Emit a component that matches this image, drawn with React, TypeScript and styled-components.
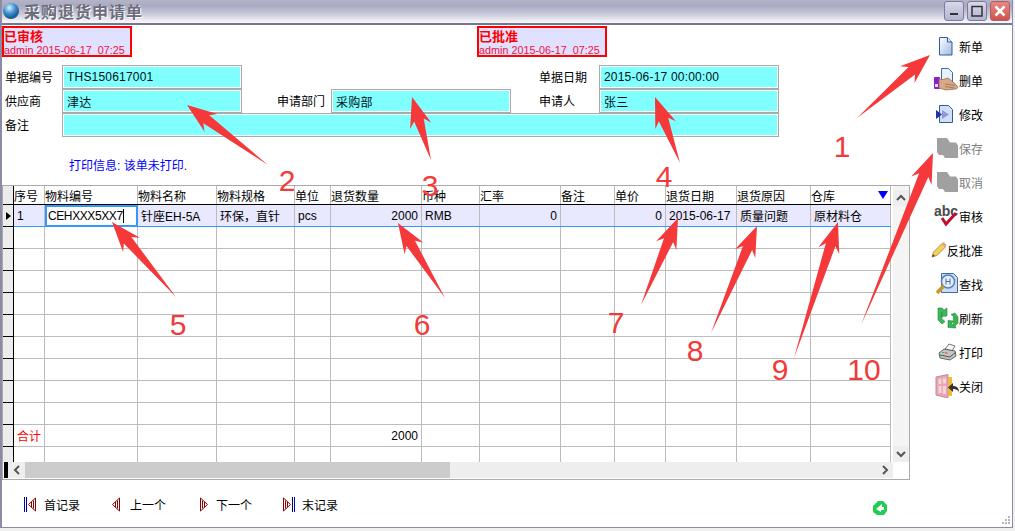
import React from 'react';
import styled, { createGlobalStyle } from 'styled-components';

const FONT = `"Liberation Sans", "Noto Sans CJK SC", sans-serif`;
const COLS = '31px 93px 79px 78px 36px 91px 58px 81px 54px 51px 71px 74px 80px';
const LINE = '#bcbcbc';

const Global = createGlobalStyle`
  html, body { margin: 0; padding: 0; background: #f0f0f0; }
  body { font: 12px ${FONT}; color: #000; }
`;

const Win = styled.div`
  position: relative;
  width: 1013px;
  height: 528px;
  box-sizing: border-box;
  display: flex;
  flex-direction: column;
  background: #fff;
  border-left: 2px solid #8b8ba6;
  border-right: 1px solid #8b8ba6;
  border-bottom: 1px solid #8b8ba6;
  overflow: hidden;
`;

const TitleBar = styled.div`
  flex: none;
  height: 25px;
  margin-left: -2px;
  margin-right: -1px;
  box-sizing: border-box;
  display: flex;
  align-items: center;
  gap: 5px;
  padding: 0 3px 1px 3px;
  background: linear-gradient(180deg, #b4b4c8 0%, #a9a9c1 25%, #c8c8d8 60%, #f6f6fa 96%);
  border-bottom: 2px solid #76768f;
`;

const Ball = styled.div`
  width: 16px;
  height: 16px;
  border-radius: 50%;
  background: radial-gradient(circle at 40% 30%, #d9f2ff 0%, #3f8fd0 40%, #165a8e 70%, #4f9a4a 100%);
`;

const TitleText = styled.div`
  font-size: 16px;
  font-weight: 700;
  letter-spacing: 1px;
  color: #6c6c7c;
  text-shadow: 1px 1px 0 #fff;
  flex: 1;
`;

const CapGroup = styled.div`
  display: flex;
  gap: 3px;
`;

const CapBtn = styled.div<{ $close?: boolean }>`
  width: 20px;
  height: 20px;
  box-sizing: border-box;
  border: 1px solid ${(p) => (p.$close ? '#b06060' : '#7b7b9c')};
  border-radius: 3px;
  display: flex;
  align-items: center;
  justify-content: center;
  background: ${(p) =>
    p.$close
      ? 'linear-gradient(180deg, #e48a80, #d0524c)'
      : 'linear-gradient(180deg, #d8d8e8, #b4b4d0)'};
`;

const Body = styled.div`
  flex: 1;
  display: flex;
  min-height: 0;
`;

const Main = styled.div`
  width: 908px;
  flex: none;
  display: flex;
  flex-direction: column;
`;

const Stamps = styled.div`
  display: flex;
  gap: 345px;
  margin-top: 1px;
`;

const Stamp = styled.div`
  width: 130px;
  height: 31px;
  box-sizing: border-box;
  border: 2px solid #f00;
  background: #e0e0ff;
  color: #f00;
  display: flex;
  flex-direction: column;
  justify-content: center;
`;

const StampTitle = styled.div`
  font-size: 13px;
  font-weight: 700;
  line-height: 15px;
  margin-top: 1px;
`;

const StampMeta = styled.div`
  font-size: 10.8px;
  line-height: 12px;
  white-space: pre;
  color: #f01040;
`;

const Form = styled.div`
  display: grid;
  grid-template-columns: 60px 180px 89px 180px 88px 180px;
  grid-auto-rows: 24px;
  margin-top: 8px;
`;

const FieldLabel = styled.div<{ $pad?: number }>`
  display: flex;
  align-items: center;
  padding-left: ${(p) => p.$pad ?? 3}px;
  padding-bottom: 1px;
  font-size: 12px;
`;

const Field = styled.div<{ $span?: number }>`
  grid-column: span ${(p) => p.$span ?? 1};
  box-sizing: border-box;
  height: 24px;
  border: 1px solid #aaa;
  box-shadow: inset 0 0 0 1px #fff;
  background: #80ffff;
  display: flex;
  align-items: center;
  padding-left: 4px;
  letter-spacing: 0.2px;
  color: #001018;
`;

const PrintInfo = styled.div`
  margin: 22px 0 0 67px;
  height: 14px;
  line-height: 14px;
  color: #00f;
`;

const GridFrame = styled.div`
  margin-top: 12px;
  height: 295px;
  box-sizing: border-box;
  border: 1px solid #aaa;
  display: flex;
  flex-direction: column;
`;

const GridBody = styled.div`
  flex: 1;
  display: flex;
  gap: 2px;
  min-height: 0;
  overflow: hidden;
`;

const Table = styled.div`
  width: 888px;
  flex: none;
  overflow: hidden;
`;

const Row = styled.div<{ $h?: number; $active?: boolean; $header?: boolean }>`
  display: grid;
  grid-template-columns: 11px ${COLS};
  height: ${(p) => p.$h ?? 22}px;
  box-sizing: border-box;
  background: ${(p) => (p.$active ? '#e8e8ff' : '#fff')};
  border-bottom: 1px solid
    ${(p) => (p.$header ? '#000' : p.$active ? '#3399ff' : LINE)};
`;

const Indicator = styled.div`
  background: #ececec;
  border-right: 1px solid #000;
  margin-bottom: -1px;
  box-shadow: inset 0 -1px 0 #000;
  display: flex;
  align-items: center;
  justify-content: center;
`;

const Pointer = styled.div`
  width: 0;
  height: 0;
  border-left: 5px solid #000;
  border-top: 4px solid transparent;
  border-bottom: 4px solid transparent;
`;

const Cell = styled.div<{ $right?: boolean; $red?: boolean }>`
  box-sizing: border-box;
  border-right: 1px solid ${LINE};
  display: flex;
  align-items: center;
  justify-content: ${(p) => (p.$right ? 'flex-end' : 'flex-start')};
  padding: 0 3px 0 3px;
  white-space: nowrap;
  overflow: hidden;
  color: ${(p) => (p.$red ? '#f00' : '#000')};
`;

const HeadCell = styled(Cell)`
  padding: 0 2px 0 0;
  justify-content: space-between;
`;

const EditCell = styled.div`
  box-sizing: border-box;
  margin: 0 0 -1px 0;
  border: 2px solid #3399ff;
  background: #fff;
  display: flex;
  align-items: center;
  padding-left: 1px;
  letter-spacing: -0.4px;
`;

const Caret = styled.span`
  display: inline-block;
  width: 1px;
  height: 14px;
  background: #000;
`;

const SortMark = styled.div`
  width: 0;
  height: 0;
  border-top: 8px solid #00f;
  border-left: 5px solid transparent;
  border-right: 5px solid transparent;
`;

const VScroll = styled.div`
  width: 16px;
  flex: none;
  background: #f4f4f4;
  display: flex;
  flex-direction: column;
  justify-content: space-between;
  padding-top: 4px;
`;

const ScrollBtn = styled.div<{ $w?: number }>`
  width: ${(p) => p.$w ?? 16}px;
  height: 16px;
  flex: none;
  background: #eee;
  display: flex;
  align-items: center;
  justify-content: center;
`;

const HScroll = styled.div`
  height: 16px;
  flex: none;
  display: flex;
  margin-bottom: 1px;
  padding-right: 16px;
`;

const BlackTab = styled.div`
  width: 4px;
  margin-left: 1px;
  background: #000;
`;

const Thumb = styled.div`
  width: 425px;
  background: #ccc;
`;

const HTrack = styled.div`
  flex: 1;
  background: #eee;
  display: flex;
  justify-content: flex-end;
`;

const BottomBar = styled.div`
  display: flex;
  align-items: center;
  padding-left: 22px;
  margin-top: 15px;
  height: 18px;
`;

const NavBtn = styled.div<{ $w: number; $gap: number }>`
  width: ${(p) => p.$w}px;
  flex: none;
  display: flex;
  align-items: center;
  gap: ${(p) => p.$gap}px;
`;

const GreenSpot = styled.div`
  margin-left: 529px;
  margin-top: 8px;
  display: flex;
`;

const Toolbar = styled.div`
  width: 73px;
  flex: none;
  display: flex;
  flex-direction: column;
  padding-top: 4px;
`;

const Tool = styled.div<{ $off?: boolean }>`
  height: 34px;
  display: flex;
  align-items: center;
  justify-content: flex-end;
  color: ${(p) => (p.$off ? '#808080' : '#000')};
`;

const Grip = styled.svg`
  position: absolute;
  right: 1px;
  bottom: 1px;
`;

const Overlay = styled.svg`
  position: absolute;
  left: -2px;
  top: 0;
  pointer-events: none;
`;

const Mark = styled.span<{ $x: number; $y: number }>`
  position: absolute;
  left: ${(p) => p.$x - 2}px;
  top: ${(p) => p.$y}px;
  transform: translate(-50%, -50%);
  font: 30px ${FONT};
  line-height: 30px;
  color: #f23a3a;
`;

const DocIcon = () => (
  <svg width="24" height="22" viewBox="0 0 24 22">
    <defs>
      <linearGradient id="doc" x1="0" y1="0" x2="1" y2="1">
        <stop offset="0" stopColor="#fff" />
        <stop offset="1" stopColor="#9db9e4" />
      </linearGradient>
    </defs>
    <path d="M4.500 2.500h8l4.500 4.500v13H4.500z" fill="url(#doc)" stroke="#2f5da0" />
    <path d="M12.500 2.500V7H17" fill="#dbe6f7" stroke="#2f5da0" />
  </svg>
);

const HandIcon = () => (
  <svg width="25" height="26" viewBox="0 0 25 26">
    <path d="M7.500 1.500h7l4 4v10h-11z" fill="#e8f0fb" stroke="#3d6bb0" />
    <rect x="0" y="10" width="6" height="12" rx="1" fill="#8a1fd0" />
    <rect x="1" y="17" width="3" height="3" fill="#e8d8ff" />
    <path d="M5 12l4 .5 5-1.500 8 6.500 2 3-2 1.500-10 1-7-2z" fill="#d9a884" stroke="#8a6650" strokeWidth=".7" />
    <path d="M11 17l10 1.500M11 19.500l9 1.500" stroke="#8a6650" strokeWidth=".7" />
  </svg>
);

const EditIcon = () => (
  <svg width="24" height="22" viewBox="0 0 24 22">
    <path d="M4.500 2.500h9l4 4v13h-13z" fill="#cfe0f6" stroke="#2f5da0" />
    <path d="M1 7l6 4.500-6 4.500z" fill="#22349c" />
    <path d="M7 7l7 4.500-7 4.500z" fill="#8e97d8" />
  </svg>
);

const BlobIcon = () => (
  <svg width="24" height="24" viewBox="0 0 24 24">
    <path d="M2 2h10l3 4.500h6l2 3V22H10l-2-3H4l-2-3z" fill="#a0a0a0" />
  </svg>
);

const AbcIcon = () => (
  <svg width="25" height="24" viewBox="0 0 25 24">
    <text x="0" y="12" fontFamily="Liberation Sans" fontWeight="700" fontSize="14" fill="#4a4a4a">abc</text>
    <path d="M8 14l4 6 10-11" fill="none" stroke="#c01030" strokeWidth="3" />
  </svg>
);

const PencilIcon = () => (
  <svg width="16" height="18" viewBox="0 0 16 18">
    <path d="M1 16l1.500-5L11 2.500l3.500 3.500L6 14.500z" fill="#f3cf5c" stroke="#a8853a" strokeWidth=".8" />
    <path d="M11 2.500l1.500-1.500 3 3L14.500 6z" fill="#e59a8e" />
    <path d="M1 16l1-3 2 2z" fill="#7a3a2a" />
  </svg>
);

const FindIcon = () => (
  <svg width="24" height="24" viewBox="0 0 24 24">
    <path d="M6.500 1.500h12l4 4v15h-16z" fill="#c9dcf4" stroke="#3d6bb0" />
    <circle cx="13" cy="9.500" r="6.500" fill="#e6eef9" stroke="#5e7fb8" strokeWidth="1.500" />
    <path d="M11 6.500v6M15 6.500v6M11 9.500h4" stroke="#3d6bb0" />
    <path d="M8.500 14L2 21" stroke="#c9982b" strokeWidth="3.500" />
  </svg>
);

const RefreshIcon = () => (
  <svg width="22" height="22" viewBox="0 0 22 22">
    <path d="M1 1h4l2 2 3-2v8l-6 .5 1.500-2.500L5 5v7l3 2.500L5 17 1 13z" fill="#3fb55c" stroke="#1f8a3a" strokeWidth=".6" />
    <path d="M18 6l3 4v6l-3 3 1 2-8-.5v-7l5.500.5-2 2.500 2 1.500V9.500L14 7.500z" fill="#37b254" stroke="#1f8a3a" strokeWidth=".6" />
  </svg>
);

const PrinterIcon = () => (
  <svg width="21" height="18" viewBox="0 0 21 18">
    <path d="M7 6l4-5 6 2-3 5z" fill="#f4f4f4" stroke="#555" strokeWidth=".8" />
    <path d="M1 10l5-4 11 2 1 5-6 4-10-2z" fill="#c4c4c4" stroke="#444" strokeWidth=".8" />
    <path d="M2 12l10 2 6-5" fill="none" stroke="#555" />
    <rect x="4" y="9" width="2.500" height="1" fill="#2c3" />
    <rect x="7" y="9.500" width="2.500" height="1" fill="#e33" />
  </svg>
);

const DoorIcon = () => (
  <svg width="24" height="24" viewBox="0 0 24 24">
    <path d="M1 3l12-2.500V24L1 21z" fill="#e9a7b4" stroke="#c08a96" />
    <rect x="3.500" y="5" width="3" height="5" fill="#f6d3da" />
    <rect x="8" y="4.500" width="3" height="5" fill="#f6d3da" />
    <rect x="3.500" y="12" width="3" height="7" fill="#f6d3da" />
    <rect x="8" y="12" width="3" height="8" fill="#f6d3da" />
    <rect x="13" y="3" width="4" height="19" fill="#eebb3a" />
    <path d="M24 18c0-4.500-3-6-6-6V9l-5 4.500 5 4.500v-3c3 0 5 1 6 3z" fill="#333" />
  </svg>
);

const TOOLS = [
  { label: '新单', icon: <DocIcon /> },
  { label: '删单', icon: <HandIcon /> },
  { label: '修改', icon: <EditIcon /> },
  { label: '保存', icon: <BlobIcon />, off: true },
  { label: '取消', icon: <BlobIcon />, off: true },
  { label: '审核', icon: <AbcIcon /> },
  { label: '反批准', icon: <PencilIcon /> },
  { label: '查找', icon: <FindIcon /> },
  { label: '刷新', icon: <RefreshIcon /> },
  { label: '打印', icon: <PrinterIcon /> },
  { label: '关闭', icon: <DoorIcon /> },
];

const HEADERS = [
  '序号', '物料编号', '物料名称', '物料规格', '单位', '退货数量', '币种',
  '汇率', '备注', '单价', '退货日期', '退货原因', '仓库',
];

const ARROWS = [
  [857, 118, 930, 55],
  [268, 165, 187, 105],
  [431, 160, 412, 97],
  [680, 163, 655, 97],
  [176, 297, 112, 222],
  [445, 298, 398, 223],
  [641, 305, 678, 218],
  [711, 333, 757, 226],
  [794, 358, 838, 222],
  [861, 325, 933, 153],
];

const MARKS = [
  { t: '1', x: 842, y: 147 },
  { t: '2', x: 287, y: 181 },
  { t: '3', x: 430, y: 186 },
  { t: '4', x: 664, y: 177 },
  { t: '5', x: 178, y: 325 },
  { t: '6', x: 422, y: 325 },
  { t: '7', x: 616, y: 323 },
  { t: '8', x: 695, y: 351 },
  { t: '9', x: 780, y: 370 },
  { t: '10', x: 864, y: 370 },
];

// thin tail widening into a barbed head
const arrowPoints = ([x1, y1, x2, y2]: number[]) => {
  const len = Math.hypot(x2 - x1, y2 - y1);
  const dx = (x2 - x1) / len;
  const dy = (y2 - y1) / len;
  const at = (back: number, side: number) =>
    `${x2 - dx * back - dy * side},${y2 - dy * back + dx * side}`;
  return [
    `${x1},${y1}`,
    at(24, 5),
    at(30, 11),
    `${x2},${y2}`,
    at(30, -11),
    at(24, -5),
  ].join(' ');
};

const Chevron = ({ d }: { d: string }) => (
  <svg width="10" height="10" viewBox="0 0 10 10">
    <path d={d} fill="none" stroke="#555" strokeWidth="2" />
  </svg>
);

// outlined triangle with an inner stripe, plus the blue end bars of first / last
const NavIcon = ({ kind }: { kind: 'first' | 'prev' | 'next' | 'last' }) => {
  const left = kind === 'first' || kind === 'prev';
  const bar = kind === 'first' || kind === 'last';
  const w = bar ? 12 : 8;
  const start = kind === 'first' ? 4 : 0;
  const outer = left ? 'M.5 7.500L7.500 1v13z' : 'M7.500 7.500L.5 1v13z';
  const inner = left ? 'M3.500 5v5M5.500 3.500v8' : 'M4.500 5v5M2.500 3.500v8';
  return (
    <svg width={w} height="15" viewBox={`0 0 ${w} 15`}>
      {kind === 'first' && <path d="M.5 0v15" stroke="#0000c8" />}
      {kind === 'first' && <path d="M2.500 0v15" stroke="#000080" />}
      <g transform={`translate(${start} 0)`}>
        <path d={outer} fill="#fff" stroke="#8b0000" />
        <path d={inner} stroke="#8b0000" />
      </g>
      {kind === 'last' && <path d="M9.500 0v15" stroke="#000080" />}
      {kind === 'last' && <path d="M11.500 0v15" stroke="#0000c8" />}
    </svg>
  );
};

const BlankRow = ({ h, children }: { h?: number; children?: React.ReactNode }) => (
  <Row $h={h}>
    <Indicator />
    {children ?? HEADERS.map((c) => <Cell key={c} />)}
  </Row>
);

export default function App() {
  return (
    <Win>
      <Global />
      <TitleBar>
        <Ball />
        <TitleText>采购退货申请单</TitleText>
        <CapGroup>
          <CapBtn>
            <svg width="12" height="12" viewBox="0 0 12 12">
              <rect x="2" y="8" width="8" height="2" fill="#333" />
            </svg>
          </CapBtn>
          <CapBtn>
            <svg width="12" height="12" viewBox="0 0 12 12">
              <path d="M1 1.500h10v9.500H1z" fill="none" stroke="#333" strokeWidth="1.500" />
            </svg>
          </CapBtn>
          <CapBtn $close>
            <svg width="12" height="12" viewBox="0 0 12 12">
              <path d="M1.500 1.500l9 9M10.500 1.500l-9 9" stroke="#fff" strokeWidth="2.500" />
            </svg>
          </CapBtn>
        </CapGroup>
      </TitleBar>
      <Body>
        <Main>
          <Stamps>
            <Stamp>
              <StampTitle>已审核</StampTitle>
              <StampMeta>admin 2015-06-17  07:25</StampMeta>
            </Stamp>
            <Stamp>
              <StampTitle>已批准</StampTitle>
              <StampMeta>admin 2015-06-17  07:25</StampMeta>
            </Stamp>
          </Stamps>
          <Form>
            <FieldLabel>单据编号</FieldLabel>
            <Field>THS150617001</Field>
            <FieldLabel />
            <div />
            <FieldLabel $pad={28}>单据日期</FieldLabel>
            <Field>2015-06-17 00:00:00</Field>
            <FieldLabel>供应商</FieldLabel>
            <Field>津达</Field>
            <FieldLabel $pad={35}>申请部门</FieldLabel>
            <Field>采购部</Field>
            <FieldLabel $pad={28}>申请人</FieldLabel>
            <Field>张三</Field>
            <FieldLabel>备注</FieldLabel>
            <Field $span={5} />
          </Form>
          <PrintInfo>打印信息: 该单未打印.</PrintInfo>
          <GridFrame>
            <GridBody>
              <Table>
                <Row $h={19} $header>
                  <Indicator />
                  {HEADERS.map((h) => (
                    <HeadCell key={h}>
                      {h}
                      {h === '仓库' && <SortMark />}
                    </HeadCell>
                  ))}
                </Row>
                <Row $active>
                  <Indicator>
                    <Pointer />
                  </Indicator>
                  <Cell>1</Cell>
                  <EditCell>
                    CEHXXX5XX7
                    <Caret />
                  </EditCell>
                  <Cell>针座EH-5A</Cell>
                  <Cell>环保，直针</Cell>
                  <Cell>pcs</Cell>
                  <Cell $right>2000</Cell>
                  <Cell>RMB</Cell>
                  <Cell $right>0</Cell>
                  <Cell />
                  <Cell $right>0</Cell>
                  <Cell>2015-06-17</Cell>
                  <Cell>质量问题</Cell>
                  <Cell>原材料仓</Cell>
                </Row>
                {Array.from({ length: 9 }, (_, i) => (
                  <BlankRow key={i} />
                ))}
                <BlankRow>
                  <Cell $red>合计</Cell>
                  {HEADERS.slice(1).map((h) => (
                    <Cell key={h} $right={h === '退货数量'}>
                      {h === '退货数量' ? '2000' : ''}
                    </Cell>
                  ))}
                </BlankRow>
                <BlankRow h={17} />
              </Table>
              <VScroll>
                <ScrollBtn>
                  <Chevron d="M1 7l4-4 4 4" />
                </ScrollBtn>
                <ScrollBtn>
                  <Chevron d="M1 3l4 4 4-4" />
                </ScrollBtn>
              </VScroll>
            </GridBody>
            <HScroll>
              <BlackTab />
              <ScrollBtn $w={17}>
                <Chevron d="M7 1L3 5l4 4" />
              </ScrollBtn>
              <Thumb />
              <HTrack>
                <ScrollBtn>
                  <Chevron d="M3 1l4 4-4 4" />
                </ScrollBtn>
              </HTrack>
            </HScroll>
          </GridFrame>
          <BottomBar>
            <NavBtn $w={88} $gap={8}>
              <NavIcon kind="first" />
              首记录
            </NavBtn>
            <NavBtn $w={88} $gap={10}>
              <NavIcon kind="prev" />
              上一个
            </NavBtn>
            <NavBtn $w={83} $gap={8}>
              <NavIcon kind="next" />
              下一个
            </NavBtn>
            <NavBtn $w={60} $gap={7}>
              <NavIcon kind="last" />
              末记录
            </NavBtn>
            <GreenSpot>
              <svg width="16" height="16" viewBox="0 0 16 16">
                <path d="M6 1h5l4 4v6l-3 4H5l-4-3V6z" fill="#22cc55" />
                <path d="M4 9l6-5v3h2v3H9v2z" fill="#fff" />
              </svg>
            </GreenSpot>
          </BottomBar>
        </Main>
        <Toolbar>
          {TOOLS.map((t) => (
            <Tool key={t.label} $off={t.off}>
              {t.icon}
              {t.label}
            </Tool>
          ))}
        </Toolbar>
      </Body>
      <Grip width="11" height="11" viewBox="0 0 11 11">
        <path d="M8 1h2v2H8zM5 4h2v2H5zM8 4h2v2H8zM2 7h2v2H2zM5 7h2v2H5zM8 7h2v2H8z" fill="#b5b5c5" />
      </Grip>
      <Overlay width="1015" height="531" viewBox="0 0 1015 531">
        {ARROWS.map((a) => (
          <polygon key={a.join()} points={arrowPoints(a)} fill="#f5383a" />
        ))}
      </Overlay>
      {MARKS.map((m) => (
        <Mark key={m.t} $x={m.x} $y={m.y}>
          {m.t}
        </Mark>
      ))}
    </Win>
  );
}
